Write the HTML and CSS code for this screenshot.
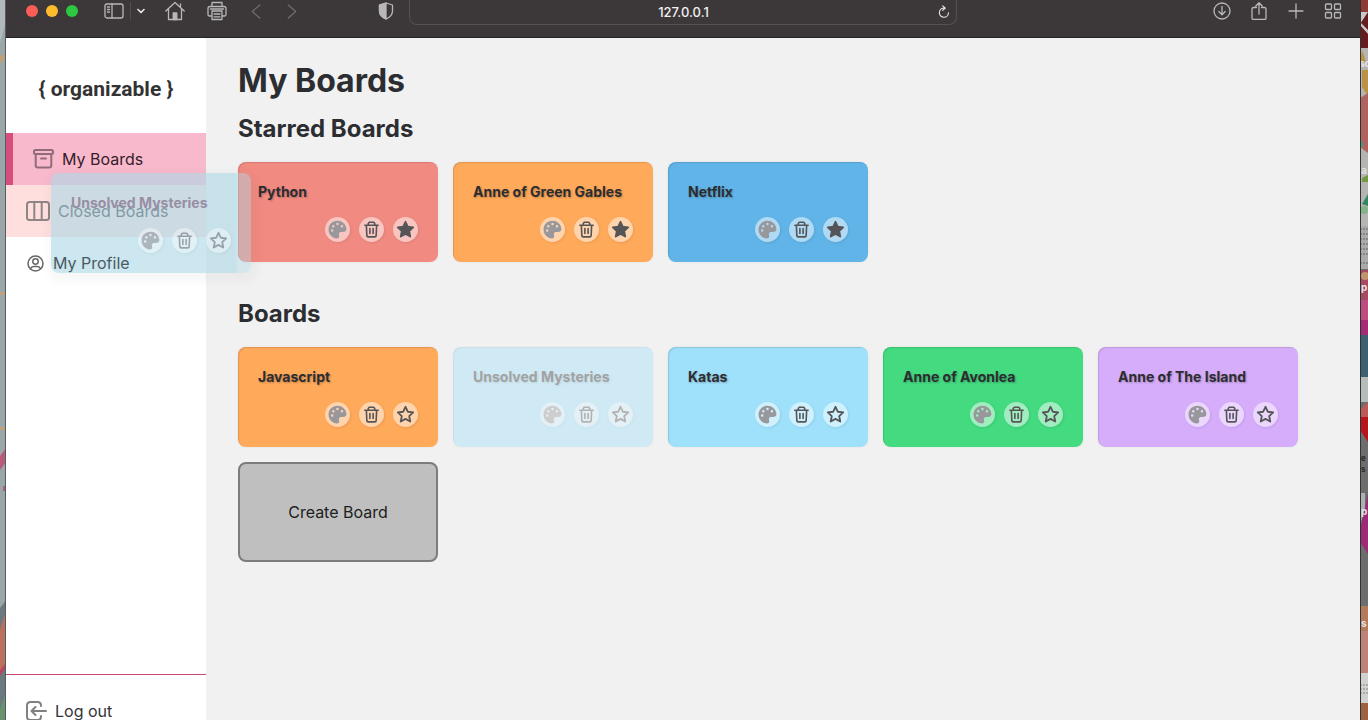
FILE: index.html
```html
<!DOCTYPE html>
<html lang="en">
<head>
<meta charset="utf-8">
<meta name="viewport" content="width=device-width, initial-scale=1">
<title>My Boards</title>
<link rel="stylesheet" href="styles.css">
</head>
<body>
<svg class="sprite" aria-hidden="true">
  <symbol id="palette" viewBox="0 0 20 20"><path fill-rule="evenodd" d="M10 .8C4.700.8.6 4.900.6 10.100.6 15.300 4.500 19.400 9.500 19.400c1.600 0 2.400-1 2.300-2.300-.1-1.500-.9-2.600.2-3.800 1.300-1.400 4.300-.2 6-1.200 1.200-.7 1.500-1.900 1.300-3.300C18.600 4.200 14.800.8 10 .8zM4.400 12.300a1.300 1.300 0 1 1 0-2.600 1.300 1.300 0 0 1 0 2.600zM5.600 7.900a1.300 1.300 0 1 1 0-2.600 1.300 1.300 0 0 1 0 2.600zM10 5.400a1.300 1.300 0 1 1 0-2.600 1.300 1.300 0 0 1 0 2.600zM14.700 7.900a1.300 1.300 0 1 1 0-2.600 1.300 1.300 0 0 1 0 2.600z"/></symbol>
  <symbol id="trash" viewBox="0 0 20 20"><path fill="none" stroke="currentColor" stroke-width="1.700" stroke-linejoin="round" stroke-linecap="round" d="M3 5.500h14M6.600 5.300V3.600l1-1.200h4.800l1 1.200v1.700M4.600 5.700l.5 10.800q.1 1.300 1.400 1.300h7q1.300 0 1.400-1.300l.5-10.800M8.300 9v5.200M11.700 9v5.200"/></symbol>
  <symbol id="star" viewBox="0 0 20 20"><path stroke="currentColor" stroke-width="1.900" stroke-linejoin="round" d="M10 1.900l2.400 5.200 5.700.7-4.200 3.900 1.100 5.700-5-2.800-5 2.800 1.100-5.700L1.900 7.800l5.700-.7z"/></symbol>
</svg>

<div class="desktop">
  <svg class="edge edge-left" viewBox="0 0 6 720" preserveAspectRatio="none" aria-hidden="true">
    <path fill="#9ba6a9" d="M0 0h6v720H0z"/><path fill="#b2b9ba" d="M0 0h5v25l-5 18z"/>
    <path fill="#bda27a" d="M0 57l6-5v5l-6 7zM0 292h6v3H0zM0 427h6v3H0z"/>
    <path fill="#b95c78" d="M0 456l6-8v14l-6 8zM3 486h3v5H3z"/><path fill="#6c7a7f" d="M0 608l6-8v120H0z"/>
    <path fill="#bb705b" d="M0 630l6-20v55l-6 9z"/><path fill="#b74563" d="M0 670l6-7v5l-6 8z"/><path fill="#69936f" d="M0 710l5-15v25H0z"/>
    <path fill="#505e63" d="M5 0h1v720H5z"/>
  </svg>

  <div class="browser">
    <header class="toolbar">
      <div class="tools tools-left">
        <div class="lights"><button class="light red" aria-label="Close"></button><button class="light amber" aria-label="Minimize"></button><button class="light green" aria-label="Zoom"></button></div>
        <button class="tool wide" aria-label="Sidebar"><svg viewBox="0 0 20 20"><rect x="1" y="3" width="18" height="14" rx="2"/><path d="M8 3v14M3.500 6h2M3.500 8.500h2M3.500 11h2"/></svg></button>
        <span class="divider"></span>
        <button class="tool tiny bright" aria-label="Sidebar menu"><svg viewBox="0 0 8 8"><path stroke-width="1.600" d="M1 2.500l3 3 3-3"/></svg></button>
        <button class="tool wide home" aria-label="Home"><svg viewBox="0 0 20 20"><path d="M.8 10L10 1.500 19.200 10M15.500 6.300V2.800M3.500 8v10.500h13V8"/><path fill="currentColor" d="M8.200 12h3.600v6.500H8.200z"/></svg></button>
        <button class="tool wide" aria-label="Print"><svg viewBox="0 0 20 20"><path d="M5 5V1.500h10V5M5 15H2.500Q1 15 1 13.500v-6Q1 5.500 3 5.500h14q2 0 2 2v6q0 1.500-1.500 1.500H15M5 10h10v8.500H5zM7 13h6M7 15.800h6M3.500 8h13"/></svg></button>
        <button class="tool arrow" aria-label="Back"><svg viewBox="0 0 10 16"><path d="M9 1L1 8l8 7"/></svg></button>
        <button class="tool arrow" aria-label="Forward"><svg viewBox="0 0 10 16"><path d="M1 1l8 7-8 7"/></svg></button>
        <button class="tool shield" aria-label="Privacy report"><svg viewBox="0 0 16 18"><path d="M8 1l6.500 2v6q0 5-6.500 8-6.500-3-6.500-8V3z"/><path fill="currentColor" d="M8 1v16Q1.500 14 1.500 9V3z"/></svg></button>
      </div>
      <div class="address">
        <input class="url" type="text" aria-label="Address" value="127.0.0.1">
        <button class="tool reload bright" aria-label="Reload"><svg viewBox="0 0 14 16"><path d="M7.500 3.500h-1a5.300 5.300 0 1 0 5.700 5.300M5.500.8l3 2.700-3 2.700"/></svg></button>
      </div>
      <div class="tools tools-right">
        <button class="tool" aria-label="Downloads"><svg viewBox="0 0 18 18"><circle cx="9" cy="9" r="8"/><path d="M9 4.500v8M5.800 9.500L9 12.800l3.200-3.300"/></svg></button>
        <button class="tool" aria-label="Share"><svg viewBox="0 0 18 18"><path d="M6.500 5.500h-3Q2 5.500 2 7v9q0 1.500 1.500 1.500h11q1.500 0 1.500-1.500V7q0-1.500-1.500-1.500h-3M9 12V.8M5.800 4L9 .8 12.200 4"/></svg></button>
        <button class="tool" aria-label="New tab"><svg viewBox="0 0 18 18"><path d="M9 2v14M2 9h14"/></svg></button>
        <button class="tool" aria-label="Tab overview"><svg viewBox="0 0 18 18"><rect x="1.500" y="2" width="6" height="5.500" rx="1"/><rect x="10.500" y="2" width="6" height="5.500" rx="1"/><rect x="1.500" y="10.500" width="6" height="5.500" rx="1"/><rect x="10.500" y="10.500" width="6" height="5.500" rx="1"/></svg></button>
      </div>
    </header>

    <div class="app">
      <aside class="sidebar">
        <div class="logo">{ organizable }</div>
        <nav class="nav">
          <a class="nav-item active" href="#boards"><svg class="icon-box" viewBox="0 0 21 20"><rect x="1" y="1" width="19" height="4" rx="1.500"/><path d="M2.700 5v11.500q0 2 2 2h11.600q2 0 2-2V5M8 9.500h5"/></svg>My Boards</a>
          <a class="nav-item hover" href="#closed"><svg class="icon-columns" viewBox="0 0 24 20"><rect x="1" y="1" width="22" height="18" rx="2.500"/><path d="M8.300 1v18M15.700 1v18"/></svg>Closed Boards</a>
          <a class="nav-item raised" href="#profile"><svg class="icon-user" viewBox="0 0 19 19"><circle cx="9.500" cy="9.500" r="7.500"/><circle cx="9.500" cy="7.500" r="2.700"/><path d="M4.500 14.800q.8-2.300 3-2.300h4q2.200 0 3 2.300"/></svg>My Profile</a>
        </nav>
        <div class="sidebar-foot"><a class="nav-item" href="#logout"><svg class="icon-box" viewBox="0 0 21 20"><path d="M15 5V4.500Q15 1 11.500 1h-7Q1 1 1 4.500v11Q1 19 4.500 19h7q3.500 0 3.500-3.500V15M20 10H6M9.500 6L5.500 10l4 4"/></svg>Log out</a></div>
      </aside>

      <main class="main">
        <h1>My Boards</h1>
        <section>
          <h2>Starred Boards</h2>
          <div class="boards">
            <article class="board coral"><h3>Python</h3><div class="actions"><button class="palette" aria-label="Colour"><svg><use href="#palette"/></svg></button><button aria-label="Delete"><svg><use href="#trash"/></svg></button><button class="starred" aria-label="Unstar"><svg><use href="#star"/></svg></button></div></article>
            <article class="board orange"><h3>Anne of Green Gables</h3><div class="actions"><button class="palette" aria-label="Colour"><svg><use href="#palette"/></svg></button><button aria-label="Delete"><svg><use href="#trash"/></svg></button><button class="starred" aria-label="Unstar"><svg><use href="#star"/></svg></button></div></article>
            <article class="board blue"><h3>Netflix</h3><div class="actions"><button class="palette" aria-label="Colour"><svg><use href="#palette"/></svg></button><button aria-label="Delete"><svg><use href="#trash"/></svg></button><button class="starred" aria-label="Unstar"><svg><use href="#star"/></svg></button></div></article>
          </div>
        </section>
        <section>
          <h2>Boards</h2>
          <div class="boards">
            <article class="board orange"><h3>Javascript</h3><div class="actions"><button class="palette" aria-label="Colour"><svg><use href="#palette"/></svg></button><button aria-label="Delete"><svg><use href="#trash"/></svg></button><button aria-label="Star"><svg><use href="#star"/></svg></button></div></article>
            <article class="board sky dragging"><h3>Unsolved Mysteries</h3><div class="actions"><button class="palette" aria-label="Colour"><svg><use href="#palette"/></svg></button><button aria-label="Delete"><svg><use href="#trash"/></svg></button><button aria-label="Star"><svg><use href="#star"/></svg></button></div></article>
            <article class="board sky"><h3>Katas</h3><div class="actions"><button class="palette" aria-label="Colour"><svg><use href="#palette"/></svg></button><button aria-label="Delete"><svg><use href="#trash"/></svg></button><button aria-label="Star"><svg><use href="#star"/></svg></button></div></article>
            <article class="board green-board"><h3>Anne of Avonlea</h3><div class="actions"><button class="palette" aria-label="Colour"><svg><use href="#palette"/></svg></button><button aria-label="Delete"><svg><use href="#trash"/></svg></button><button aria-label="Star"><svg><use href="#star"/></svg></button></div></article>
            <article class="board violet"><h3>Anne of The Island</h3><div class="actions"><button class="palette" aria-label="Colour"><svg><use href="#palette"/></svg></button><button aria-label="Delete"><svg><use href="#trash"/></svg></button><button aria-label="Star"><svg><use href="#star"/></svg></button></div></article>
            <button class="create">Create Board</button>
          </div>
        </section>
      </main>

      <article class="board ghost"><h3>Unsolved Mysteries</h3><div class="actions"><button class="palette" aria-label="Colour"><svg><use href="#palette"/></svg></button><button aria-label="Delete"><svg><use href="#trash"/></svg></button><button aria-label="Star"><svg><use href="#star"/></svg></button></div></article>
    </div>
  </div>

  <svg class="edge edge-right" viewBox="0 0 8 720" preserveAspectRatio="none" aria-hidden="true">
    <path fill="#6d6d6d" d="M0 0h8v720H0z"/><path fill="#8e3a35" d="M0 0h8v12H0z"/><path fill="#651d20" d="M0 12h8v36H0z"/>
    <path fill="#c9c9c9" d="M0 12h8L0 24zM0 22l8 8v4l-8-9z"/><path fill="#b4b4b2" d="M0 48h8v180H0z"/>
    <path fill="#bb9145" d="M2 50l4 12H0zM2 70h6v26l-6-9z"/><path fill="#b06460" d="M0 98l8-5v60l-8-6z"/><path fill="#4a9a79" d="M0 138l4 7-4 4z"/>
    <path fill="#719a43" d="M2 178l6-3v7H2z"/><path fill="#33885f" d="M2 204l6-10v12z"/><circle fill="#82b487" cx="4" cy="210" r="4"/>
    <path fill="#aaa" d="M0 226h8v43H0z"/><path stroke="#666" stroke-dasharray="2 1" d="M0 229h8M0 234h8M0 239h8M0 244h8M0 249h8M0 254h8M0 263h8"/>
    <path fill="#a64a64" d="M0 270h8v30H0z"/><circle fill="#c3936d" cx="5" cy="276" r="4"/><path fill="#bd4c81" d="M0 300h8v20H0z"/><path fill="#a62b76" d="M0 320h8v15H0z"/>
    <path fill="#3c6170" d="M0 335h8v42H0z"/><path fill="#b5bcba" d="M0 377h8v25H0z"/><path fill="#b5161d" d="M0 412l8-10v40l-8-12z"/><path fill="#bb5a57" d="M0 410l8-8v15H0z"/>
    <path fill="#a9b2b1" d="M0 493h5v15l-5 17z"/><path fill="#9b2a77" d="M0 530l8-36v60l-8-12z"/>
    <path fill="#b37a5c" d="M0 606h8v25H0z"/><path fill="#bd8379" d="M0 631h8v42H0z"/><path fill="#d0d0ce" d="M0 673h8v30H0z"/><path stroke="#888" stroke-dasharray="2 1" d="M0 685h8M0 689h8M0 693h8"/><path fill="#9e6243" d="M0 703h8v17H0z"/>
    <text class="edge-text" x="-1" y="67">sc</text><text class="edge-text" x="1" y="174">a</text><text class="edge-text" x="1" y="291">p</text><text class="edge-text dark" x="1" y="461">e</text><text class="edge-text dark" x="1" y="472">s</text><text class="edge-text" x="1" y="515">p</text><text class="edge-text" x="1" y="627">s</text>
    <path fill="#333" d="M0 0h1v720H0z"/>
  </svg>
</div>
</body>
</html>
```
FILE: styles.css
```css
* { box-sizing: border-box; }
body { margin: 0; font-family: Inter, "Liberation Sans", sans-serif; font-size: 16px; color: #2c2d31; overflow: hidden; }
button { padding: 0; border: 0; background: none; font: inherit; color: inherit; }
h1, h2, h3 { margin: 0; font-weight: 700; }
.sprite { position: absolute; width: 0; height: 0; }

.desktop { display: grid; grid-template-columns: 6px minmax(0, 1fr) 8px; height: 100vh; }
.edge { width: 100%; height: 100vh; display: block; }
.edge-text { font: 700 10px Inter, sans-serif; fill: #e2e2e2; }
.edge-text.dark { font-size: 8px; fill: #292929; }
.browser { display: flex; flex-direction: column; min-width: 0; height: 100vh; overflow: hidden; }

/* Browser toolbar */
.toolbar { display: grid; grid-template-columns: 1fr minmax(0, 548px) 1fr; flex: none; height: 38px; background: #3c3839; border-bottom: 1px solid #252223; color: #b9b7b7; }
.tools { display: flex; align-items: center; height: 22px; }
.tools-left { padding: 0 15px 0 20px; }
.tools-right { justify-content: flex-end; gap: 19px; padding-right: 18px; }
.lights { display: flex; gap: 8px; margin-right: 26px; }
.light { width: 12px; height: 12px; border-radius: 50%; }
.red { background: #fb5e57; }
.amber { background: #fdbb2e; }
.green { background: #2bc840; }
.tool { display: flex; width: 18px; height: 18px; flex: none; }
.tool svg { width: 100%; height: 100%; fill: none; stroke: currentColor; stroke-width: 1.3; stroke-linecap: round; stroke-linejoin: round; }
.wide { width: 20px; height: 20px; margin-right: 22px; }
.wide:has(+ .divider) { margin-right: 6px; }
.divider { width: 1px; height: 18px; margin-right: 6px; background: #514d4e; }
.tiny { width: 8px; height: 8px; margin-right: 20px; }
.bright { color: #e8e8e8; }
.arrow { width: 10px; height: 15px; margin: 0 24px 0 2px; color: #716e6f; }
.shield { width: 16px; margin-left: auto; }
.address { display: flex; align-items: center; height: 25px; border: 1px solid #555152; border-top: 0; border-radius: 0 0 8px 8px; }
.url { flex: 1; min-width: 0; padding: 0 0 0 19px; border: 0; background: none; color: #f0f0f0; font: 500 13px Inter, sans-serif; text-align: center; }
.reload { width: 12px; height: 14px; margin-right: 6px; }

/* Sidebar */
.app { position: relative; display: flex; flex: 1; min-height: 0; }
.sidebar { display: flex; flex-direction: column; flex: 0 0 200px; background: #fff; }
.logo { display: flex; align-items: center; justify-content: center; flex: none; height: 95px; padding-top: 7px; font: 700 21px Roboto, sans-serif; color: #333; }
.nav { flex: 1; }
.nav-item { display: flex; align-items: center; gap: 8px; height: 52px; padding-left: 20px; color: #333; text-decoration: none; }
.nav-item svg { flex: none; fill: none; stroke: #808080; stroke-width: 2; stroke-linecap: round; stroke-linejoin: round; }
.nav-item.active { border-left: 7px solid #d74d7c; background: #f9b9cd; color: #35202a; }
.nav-item.active svg { stroke: #916b7a; }
.nav-item.hover { background: #ffdfdd; }
.nav-item.hover svg { stroke: #8f8585; }
.nav-item.raised { position: relative; z-index: 2; color: #4a5a62; }
.icon-box { width: 21px; height: 20px; }
.icon-columns { width: 24px; height: 20px; }
.nav-item .icon-user { width: 19px; height: 19px; stroke: #666; stroke-width: 1.5; }
.sidebar-foot { margin-bottom: -17px; padding-top: 10px; border-top: 1px solid #c9486f; }

/* Boards */
.main { flex: 1; min-width: 0; padding: 20px 32px; background: #f1f1f1; }
h1 { font-size: 32px; line-height: 46px; }
h2 { font-size: 24px; line-height: 32px; padding: 9px 0 17px; }
section + section { padding-top: 27px; }
section + section h2 { padding-top: 9px; padding-bottom: 17px; }
.boards { display: flex; flex-wrap: wrap; gap: 15px; }
.board { display: flex; flex-direction: column; justify-content: space-between; width: 200px; height: 100px; padding: 20px; border-radius: 8px; box-shadow: inset 1px 1px 1px rgba(0, 0, 0, .12), 0 0 3px rgba(0, 0, 0, .06); }
.board h3 { font-size: 14px; line-height: 20px; white-space: nowrap; text-shadow: 1px 1px 2px rgba(0, 0, 0, .25); }
.actions { display: flex; justify-content: flex-end; gap: 9px; }
.actions button { display: grid; place-items: center; width: 25px; height: 25px; border-radius: 50%; background: rgba(255, 255, 255, .5); color: #555558; box-shadow: 1px 1px 3px rgba(0, 0, 0, .08); }
.actions svg { width: 19px; height: 19px; fill: none; }
.actions .palette svg { fill: #98989c; }
.actions .starred svg { fill: currentColor; }
.coral { background: #f18b82; }
.orange { background: #ffa95a; }
.blue { background: #61b4e7; }
.sky { background: #9fe0fb; }
.green-board { background: #43da80; }
.violet { background: #d6adfb; }
.dragging { opacity: .4; }
.create { width: 200px; height: 100px; border: 2px solid #7c7c7c; border-radius: 8px; background: #bfbfbf; color: #202020; }

/* Card being dragged over the page */
.ghost { position: absolute; z-index: 1; left: 45px; top: 135px; background: linear-gradient(90deg, rgba(173, 216, 230, .62) 92%, rgba(173, 216, 230, .42) 94%); box-shadow: 2px 4px 10px 5px rgba(0, 0, 0, .03); }
.ghost h3 { color: #978ea3; text-shadow: none; }
.ghost .actions button { opacity: .6; background: rgba(255, 255, 255, .7); color: #77777a; }
```
